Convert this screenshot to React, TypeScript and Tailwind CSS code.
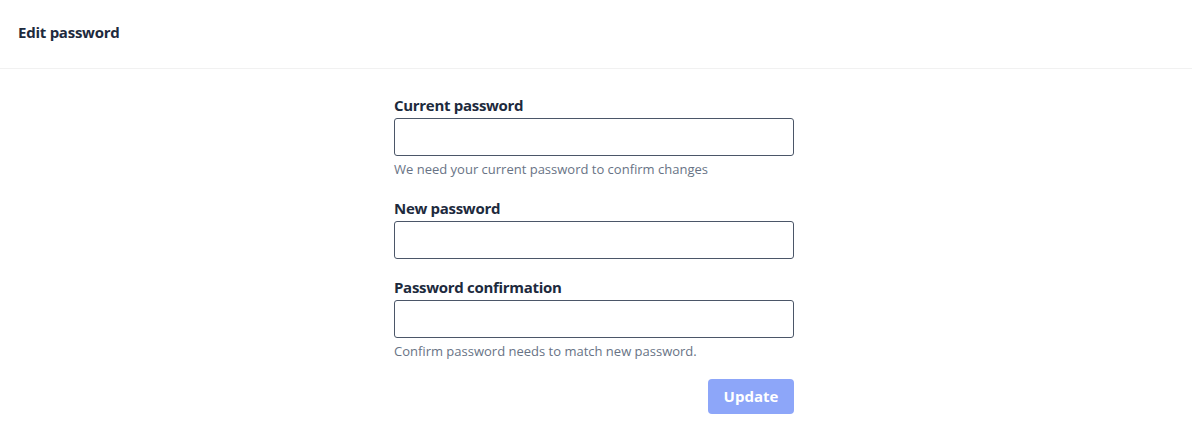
import React from "react";

type FieldProps = {
  label: string;
  help?: string;
  className?: string;
};

const Field: React.FC<FieldProps> = ({ label, help, className }) => (
  <div className={className}>
    <label className="block text-[15px] leading-[20px] font-bold text-[#1d2a3d] tracking-[-0.3px]">
      {label}
    </label>
    <input
      type="password"
      className="mt-[3px] block w-full h-[38px] rounded-[3px] border border-[#4b5668] bg-white px-3 outline-none"
    />
    {help && (
      <p className="mt-[4px] text-[13px] leading-[18px] text-[#687385]">{help}</p>
    )}
  </div>
);

export default function App() {
  return (
    <div className="min-h-screen bg-white font-['Open_Sans','Liberation_Sans',sans-serif]">
      {/* Header */}
      <div className="h-[69px] border-b border-[#f1f1f1] flex items-center px-[18px]">
        <h1 className="text-[15px] font-bold text-[#1d2a3d] tracking-[-0.25px] -mt-[4px]">Edit password</h1>
      </div>

      {/* Form */}
      <div className="flex justify-center">
        <form className="w-[400px] mt-[26px] -translate-x-[2px]">
          <Field
            label="Current password"
            help="We need your current password to confirm changes"
          />
          <Field label="New password" className="mt-[20px]" />
          <Field
            label="Password confirmation"
            help="Confirm password needs to match new password."
            className="mt-[18px]"
          />
          <div className="flex justify-end mt-[19px]">
            <button
              type="button"
              className="w-[86px] h-[35px] rounded-[4px] bg-[#8da6f9] text-white text-[15px] font-bold"
            >
              Update
            </button>
          </div>
        </form>
      </div>
    </div>
  );
}
